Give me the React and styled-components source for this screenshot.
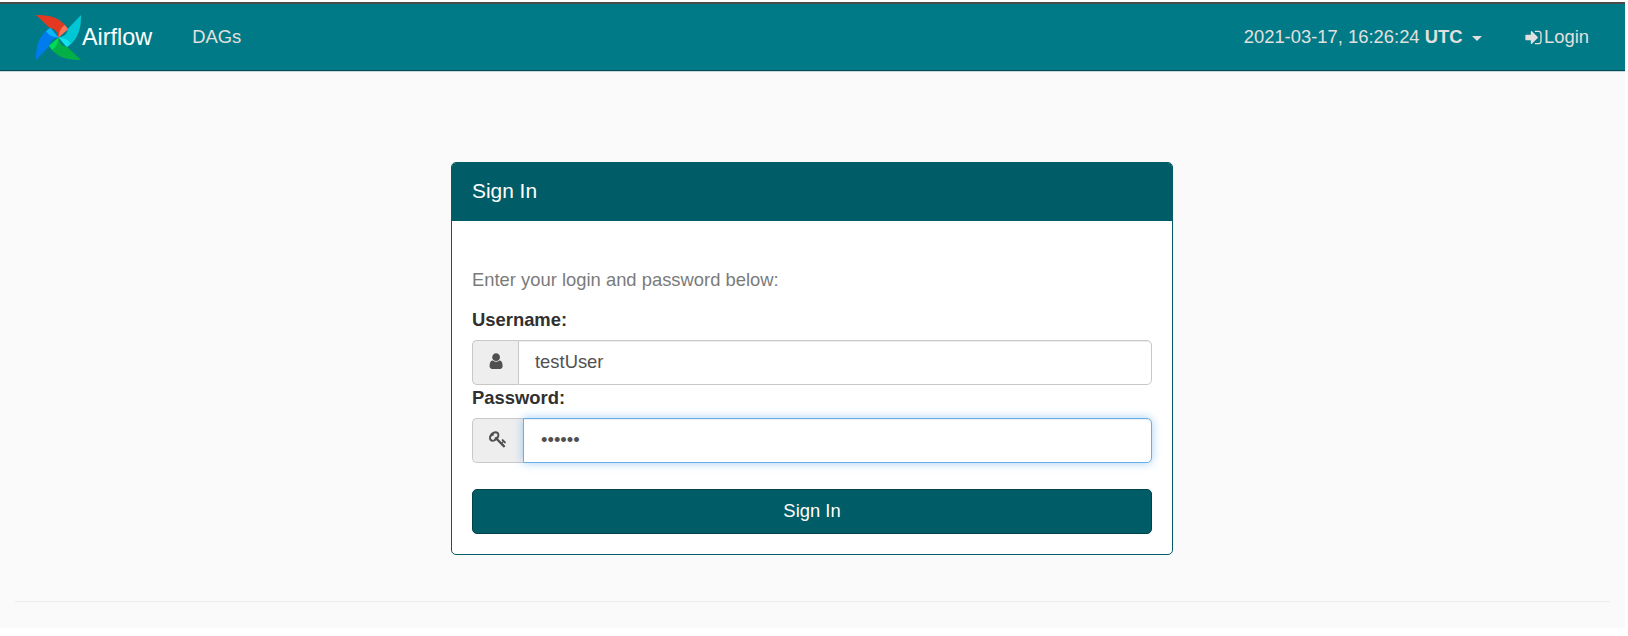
import React from 'react';
import styled, { createGlobalStyle, css } from 'styled-components';

const GlobalStyle = createGlobalStyle`
  *, *::before, *::after { box-sizing: border-box; }
  body {
    margin: 0;
    background: #fff;
    font-family: "Liberation Sans", Arial, Helvetica, sans-serif;
    font-size: 18.4px;
    line-height: 26px;
    color: #51504f;
    overflow: hidden;
  }
`;

const Page = styled.div`
  width: 1625px;
  height: 626px;
  margin-top: 2px;
  background: #fafafa;
`;

const Navbar = styled.nav`
  display: flex;
  align-items: center;
  height: 69px;
  padding: 0 36px;
  background: #007a87;
  border-top: 2px solid #4b4b4b;
  border-bottom: 1px solid #0b4a52;
  box-shadow: 0 1px 0 #c3dadd;
  color: #e2e0df;
`;

const Brand = styled.a`
  display: flex;
  align-items: center;
  font-size: 23.4px;
  color: #fff;
`;

const Logo = styled.svg`
  display: block;
  width: 45px;
  height: 45px;
  margin-right: 1px;
`;

const NavItem = styled.a`
  display: flex;
  align-items: center;
  white-space: pre;
  margin-left: ${(p) => p.$gap}px;
`;

const NavEnd = styled.div`
  display: flex;
  margin-left: auto;
`;

const Caret = styled.span`
  width: 0;
  height: 0;
  margin: 2px 0 0 9px;
  border: 5px solid transparent;
  border-top-color: currentColor;
  border-bottom: 0;
`;

const Icon = styled.svg`
  display: block;
  width: ${(p) => p.$size}px;
  height: ${(p) => p.$size}px;
  margin-right: ${(p) => p.$after || 0}px;
  fill: currentColor;
`;

const Panel = styled.section`
  width: 722px;
  height: 393px;
  margin: 91px 0 0 451px;
  background: #fff;
  border: 1px solid #005c66;
  border-radius: 5px;
  overflow: hidden;
`;

const PanelHeader = styled.h1`
  margin: 0;
  padding: 0 20px;
  height: 58px;
  font-size: 20.9px;
  font-weight: 400;
  line-height: 55px;
  background: #005c66;
  color: #fff;
`;

const Form = styled.form`
  display: flex;
  flex-direction: column;
  padding: 46px 20px 0;
`;

const Hint = styled.p`
  margin: 0 0 14px;
  color: #7b7b7b;
`;

const Label = styled.label`
  font-weight: 700;
  color: #303030;
  margin-bottom: 7px;
`;

const InputGroup = styled.div`
  display: flex;
  height: 45px;
  margin-bottom: ${(p) => p.$after}px;
`;

const Addon = styled.span`
  display: flex;
  align-items: center;
  justify-content: center;
  width: ${(p) => p.$width}px;
  padding: 0 0 2px 1px;
  background: #eee;
  border: 1px solid #c8c8c8;
  border-right: 0;
  border-radius: 5px 0 0 5px;
`;

const Input = styled.input`
  flex: 1;
  min-width: 0;
  padding: 0 16px 2px;
  font: inherit;
  color: #51504f;
  background: #fff;
  border: 1px solid #c8c8c8;
  border-radius: 0 5px 5px 0;
  box-shadow: inset 0 1px 1px rgba(0, 0, 0, 0.075);
  outline: 0;
  ${(p) =>
    p.$active &&
    css`
      padding-left: 17px;
      border-color: #66afe9;
      box-shadow: inset 0 1px 1px rgba(0, 0, 0, 0.075), 0 0 10px rgba(102, 175, 233, 0.6);
    `}
`;

const SubmitButton = styled.button`
  height: 45px;
  padding: 0 0 2px;
  font: inherit;
  color: #fff;
  background: #005c66;
  border: 1px solid #01434a;
  border-radius: 5px;
`;

const Divider = styled.hr`
  margin: 46px 15px 0;
  border: 0;
  border-top: 1px solid #ececec;
`;

const SIGN_IN =
  'M1312 896q0 26-19 45l-544 544q-19 19-45 19t-45-19-19-45v-288h-448q-26 0-45-19t-19-45v-384q0-26 19-45t45-19h448v-288q0-26 19-45t45-19 45 19l544 544q19 19 19 45zm352-352v704q0 119-84.5 203.5t-203.5 84.5h-320q-13 0-22.5-9.5t-9.5-22.5q0-4-1-20t-.5-26.5 3-23.5 10-19.5 20.5-6.5h320q66 0 113-47t47-113v-704q0-66-47-113t-113-47h-312l-11.5-1-11.5-3-8-5.5-7-9-2-13.5q0-4-1-20t-.5-26.5 3-23.5 10-19.5 20.5-6.5h320q119 0 203.5 84.5t84.5 203.5z';
const USER =
  'M1536 1399q0 109-62.5 187t-150.5 78h-854q-88 0-150.5-78t-62.5-187q0-85 8.5-160.5t31.5-152 58.5-131 94-89 134.5-34.5q131 128 313 128t313-128q76 0 134.5 34.5t94 89 58.5 131 31.5 152 8.5 160.5zm-256-887q0 159-112.5 271.5t-271.5 112.5-271.5-112.5-112.5-271.5 112.5-271.5 271.5-112.5 271.5 112.5 112.5 271.5z';
const KEY =
  'M832 512q0-80-56-136t-136-56-136 56-56 136q0 42 19 83-41-19-83-19-80 0-136 56t-56 136 56 136 136 56 136-56 56-136q0-42-19-83 41 19 83 19 80 0 136-56t56-136zm851 704q0 17-49 66t-66 49q-9 0-28.5-16t-36.5-33-38.5-40-24.5-26l-96 96 220 220q28 28 28 68 0 42-39 81t-81 39q-40 0-68-28l-671-671q-176 131-365 131-163 0-265.5-102.5t-102.5-265.5q0-160 95-313t248-248 313-95q163 0 265.5 102.5t102.5 265.5q0 189-131 365l355 355 96-96q-3-3-26-24.5t-40-38.5-33-36.5-16-28.5q0-17 49-66t66-49q13 0 23 10 6 6 46 44.5t82 79.5 86.5 86 73 78 28.5 41z';

const Glyph = ({ path, size, after }) => (
  <Icon $size={size} $after={after} viewBox="0 0 1792 1792" aria-hidden="true">
    <path d={path} />
  </Icon>
);

const BLADES = [
  ['#e43921', '#ff7557'],
  ['#00c7d4', '#11e1ee'],
  ['#04b046', '#00d95a'],
  ['#017cee', '#0cb6ff'],
];

const Pinwheel = () => (
  <Logo viewBox="0 0 45 45" aria-hidden="true">
    {BLADES.map(([main, fold], i) => (
      <g key={main} transform={`rotate(${i * 90} 22.5 22.5)`}>
        <path fill={fold} d="M24 6.500C27.500 8.500 30.500 11.500 32.200 14.300L22.500 22.500L21 15Z" />
        <path
          fill={main}
          d="M0 0C13 -0.200 21.500 2.500 28 9C29 10.200 28.500 10.500 27 11.500C24.500 13.500 23 17 22.500 22.500C21.500 16.500 19 13.600 14 13.300Z"
        />
      </g>
    ))}
  </Logo>
);

export default function App() {
  return (
    <>
      <GlobalStyle />
      <Page>
        <Navbar>
          <Brand>
            <Pinwheel />
            Airflow
          </Brand>
          <NavItem $gap={40}>DAGs</NavItem>
          <NavEnd>
            <NavItem $gap={0}>
              2021-03-17, 16:26:24 <b>UTC</b>
              <Caret />
            </NavItem>
            <NavItem $gap={42}>
              <Glyph path={SIGN_IN} size={19} after={1.5} />
              Login
            </NavItem>
          </NavEnd>
        </Navbar>
        <Panel>
          <PanelHeader>Sign In</PanelHeader>
          <Form>
            <Hint>Enter your login and password below:</Hint>
            <Label htmlFor="username">Username:</Label>
            <InputGroup $after={0}>
              <Addon $width={46}>
                <Glyph path={USER} size={18.2} />
              </Addon>
              <Input id="username" defaultValue="testUser" />
            </InputGroup>
            <Label htmlFor="password">Password:</Label>
            <InputGroup $after={26}>
              <Addon $width={51}>
                <Glyph path={KEY} size={18.2} />
              </Addon>
              <Input id="password" type="password" defaultValue="secret" $active />
            </InputGroup>
            <SubmitButton type="button">Sign In</SubmitButton>
          </Form>
        </Panel>
        <Divider />
      </Page>
    </>
  );
}
